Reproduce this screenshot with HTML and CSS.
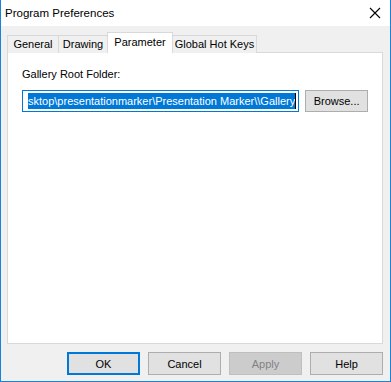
FILE: index.html
```html
<!DOCTYPE html>
<html>
<head>
  <meta charset="UTF-8">
  <title>Program Preferences</title>
  <link rel="stylesheet" href="styles.css">
</head>
<body>
  <div class="window">
    <div class="titlebar">
      <span class="title">Program Preferences</span>
      <svg class="close" width="12" height="12" viewBox="0 0 12 12">
        <path d="M1 1 L11 11 M11 1 L1 11" stroke="#000" stroke-width="1.1" fill="none"/>
      </svg>
    </div>

    <div class="content">
      <div class="tabs">
        <div class="tab tab-general">General</div>
        <div class="tab tab-drawing">Drawing</div>
        <div class="tab tab-param active">Parameter</div>
        <div class="tab tab-keys">Global Hot Keys</div>
      </div>

      <div class="panel">
        <div class="field-label">Gallery Root Folder:</div>
        <div class="field-row">
          <div class="textbox"><span class="sel">sktop\presentationmarker\Presentation Marker\\Gallery</span><span class="caret"></span></div>
          <button class="btn browse">Browse...</button>
        </div>
      </div>

      <div class="buttons">
        <button class="btn default">OK</button>
        <button class="btn">Cancel</button>
        <button class="btn disabled">Apply</button>
        <button class="btn">Help</button>
      </div>
    </div>
  </div>
</body>
</html>
```

FILE: styles.css
```css
body {
  margin: 0;
  font-family: "Liberation Sans", Arial, sans-serif;
  font-size: 11px;
  color: #000;
}
.window {
  width: 391px;
  height: 382px;
  box-sizing: border-box;
  border: 1px solid #1883d7;
  border-top: none;
  display: flex;
  flex-direction: column;
  background: #f0f0f0;
}
.titlebar {
  height: 26px;
  background: #fff;
  display: flex;
  align-items: center;
  justify-content: space-between;
  padding: 0 8px 0 4px;
}
.title {
  font-size: 11.5px;
}
.close {
  margin-right: 1px;
}
.content {
  flex: 1;
  display: flex;
  flex-direction: column;
  padding: 7px 7px 6px 6px;
}
.tabs {
  height: 19px;
  display: flex;
  align-items: flex-end;
  position: relative;
  z-index: 1;
}
.tab {
  height: 17px;
  line-height: 17px;
  box-sizing: content-box;
  text-align: center;
  border: 1px solid #d9d9d9;
  border-bottom: none;
  margin-right: -1px;
  margin-bottom: -1px;
  background: #f0f0f0;
  white-space: nowrap;
}
.tab-general { width: 50px; }
.tab-drawing { width: 48px; }
.tab-param { width: 64px; }
.tab-keys { width: 83px; }
.tab.active {
  height: 20px;
  line-height: 18px;
  background: #fff;
  position: relative;
  z-index: 2;
}
.panel {
  flex: 1;
  background: #fff;
  border: 1px solid #d9d9d9;
  padding: 14px 14px 0 14px;
}
.field-label {
  line-height: 14px;
}
.field-row {
  display: flex;
  gap: 6px;
  margin-top: 9px;
}
.textbox {
  width: 278px;
  height: 22px;
  box-sizing: border-box;
  border: 1px solid #0078d7;
  padding: 2px 2px 2px 5px;
  display: flex;
  justify-content: flex-end;
  overflow: hidden;
  white-space: nowrap;
}
.sel {
  background: #0078d7;
  color: #fff;
  line-height: 16px;
}
.caret {
  width: 1px;
  height: 16px;
  background: #000;
}
.btn {
  font-family: inherit;
  font-size: 11px;
  height: 22px;
  border: 1px solid #adadad;
  background: #e1e1e1;
  color: #000;
  padding: 0;
}
.browse {
  width: 63px;
}
.buttons {
  display: flex;
  justify-content: flex-end;
  gap: 8px;
  margin-top: 8px;
}
.buttons .btn {
  width: 73px;
  height: 23px;
}
.btn.default {
  border: 2px solid #0078d7;
}
.btn.disabled {
  background: #cccccc;
  border-color: #bfbfbf;
  color: #838383;
}
```
